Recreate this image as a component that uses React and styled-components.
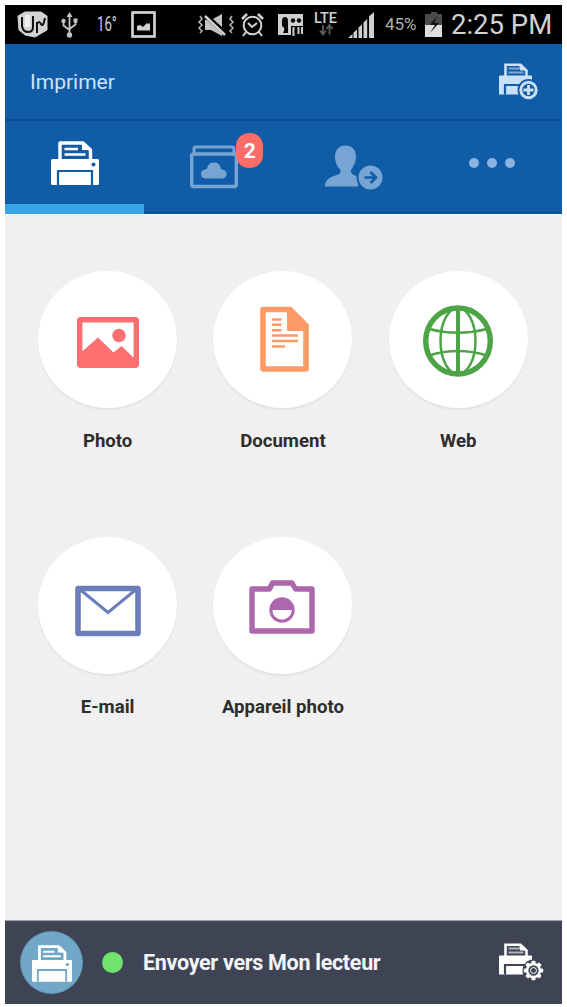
import React from 'react'
import styled, { createGlobalStyle } from 'styled-components';

const GlobalStyle = createGlobalStyle`
  body {
    margin: 0;
    background: #ffffff;
    font-family: Roboto, 'Liberation Sans', sans-serif;
  }
`;

const Screen = styled.div`
  box-sizing: border-box;
  width: 557px;
  height: 999px;
  margin: 5px;
  display: flex;
  flex-direction: column;
  background: #f0f0f0;
  overflow: hidden;
`;

const Svg = styled.svg`
  display: block;
  flex: none;
  margin-left: ${props => props.$gap || 0}px;
  overflow: visible;
`;

// status bar
const StatusBar = styled.div`
  height: 39px;
  flex: none;
  display: flex;
  align-items: center;
  background: #000000;
  color: #d2d2d2;
`;

const Temperature = styled.div`
  width: 20px;
  margin-left: 19px;
  font-size: 20px;
  line-height: 39px;
  white-space: nowrap;
  transform: scaleX(0.66);
  transform-origin: left center;
`;

const Network = styled.div`
  width: 27px;
  height: 39px;
  margin-left: 9px;
  display: flex;
  flex-direction: column;
  align-items: center;
  padding-top: 9px;
  box-sizing: border-box;
  font-size: 14.5px;
  line-height: 9px;
  font-weight: 500;
`;

const Percent = styled.div`
  width: 34px;
  margin-left: 11px;
  font-size: 17px;
  line-height: 39px;
  color: #aeaeae;
`;

const Clock = styled.div`
  margin-left: 9px;
  font-size: 27.5px;
  line-height: 39px;
  white-space: nowrap;
`;

// header
const TitleBar = styled.div`
  box-sizing: border-box;
  height: 77px;
  flex: none;
  display: flex;
  align-items: center;
  justify-content: space-between;
  padding: 1px 19px 0 25px;
  background: #105ca7;
  border-bottom: 2px solid #0a4a8b;
`;

const Title = styled.div`
  color: #cfe2fa;
  font-size: 21px;
  line-height: 24px;
`;

const Tabs = styled.div`
  height: 93px;
  flex: none;
  display: grid;
  grid-template-columns: repeat(4, 139.25px);
  background: #105ca7;
`;

const Tab = styled.div`
  box-sizing: border-box;
  position: relative;
  display: flex;
  justify-content: center;
  padding-top: ${props => props.$top}px;
  border-bottom: ${props => props.$active ? '10px solid #38a6e6' : '2px solid #0b4f9c'};
`;

const Badge = styled.div`
  position: absolute;
  left: 92px;
  top: 12px;
  width: 27px;
  height: 35px;
  border-radius: 13px;
  background: #fb6d66;
  color: #ffffff;
  font-size: 21px;
  font-weight: 700;
  line-height: 36px;
  text-align: center;
`;

// content
const Content = styled.div`
  flex: 1;
  display: grid;
  grid-template-columns: repeat(3, 175.3px);
  grid-auto-rows: 265.5px;
  align-content: start;
  padding: 56px 0 0 15px;
  border-top: 1px solid #fdfbfb;
`;

const Item = styled.div`
  display: flex;
  flex-direction: column;
  align-items: center;
`;

const Circle = styled.div`
  width: 139px;
  height: 137px;
  border-radius: 50%;
  display: flex;
  align-items: center;
  justify-content: center;
  background: #ffffff;
  box-shadow: 0 2px 2px rgba(0, 0, 0, 0.06);
`;

const Label = styled.div`
  margin-top: 22px;
  color: #2d2d2d;
  font-size: 18.6px;
  font-weight: 700;
  line-height: 22px;
  white-space: nowrap;
`;

// footer
const Footer = styled.div`
  box-sizing: border-box;
  height: 84px;
  flex: none;
  display: flex;
  align-items: center;
  padding: 0 19px 0 15px;
  background: #3f4455;
  border-top: 1px solid #9da0a8;
`;

const Avatar = styled.div`
  box-sizing: border-box;
  width: 63px;
  height: 63px;
  border-radius: 50%;
  border: 1px solid #5f92b5;
  display: flex;
  align-items: center;
  justify-content: center;
  background: #71a8c7;
`;

const Dot = styled.div`
  width: 21px;
  height: 21px;
  margin-left: 19px;
  border-radius: 50%;
  background: #70e36c;
`;

const Destination = styled.div`
  flex: 1;
  margin-left: 20px;
  color: #f4f5f7;
  font-size: 21.5px;
  font-weight: 700;
  letter-spacing: -0.3px;
  white-space: nowrap;
`;

function Printer({ size, color, back }) {
  return (
    <Svg width={size} height={size * 43 / 48} viewBox="0 0 48 43">
      <path d="M9 18V2h23l7.500 7V18" fill="none" stroke={color} strokeWidth="3.4" strokeLinejoin="round" />
      <path d="M31 2v7h8z" fill={color} />
      <path d="M13.500 8h13.500M13.500 13.500h21" stroke={color} strokeWidth="2.4" />
      <rect x="0" y="18" width="48" height="26" rx="1.5" fill={color} />
      <path d="M7 44V30h34V44" fill="none" stroke={back} strokeWidth="2.2" />
      <circle cx="42.5" cy="23.5" r="2" fill={back} />
    </Svg>
  )
}

function SmallPrinter({ color, back, children }) {
  return (
    <Svg width="44" height="39" viewBox="0 0 44 39">
      <path d="M6.5 13V1.8H21.500l6 5.700v5.500" fill="none" stroke={color} strokeWidth="2.6" />
      <path d="M9.500 5.500h11M9.500 9.500h15" stroke={color} strokeWidth="2.200" opacity="0.6" />
      <path d="M20 1l1 6.500h7z" fill={color} />
      <path d="M0 13.500a1 1 0 0 1 1-1h31a1 1 0 0 1 1 1v18H0z" fill={color} />
      <path d="M6 31.5V22h24" fill="none" stroke={back} strokeWidth="2.200" />
      {children}
    </Svg>
  )
}

function GearTeeth({ color }) {
  return [0, 45, 90, 135, 180, 225, 270, 315].map(angle => (
    <rect key={angle} x="32.5" y="17.8" width="4" height="4" rx="1" fill={color} transform={`rotate(${angle} 34.5 27.5)`} />
  ))
}

function PhotoIcon() {
  return (
    <Svg width="62" height="70" viewBox="0 0 62 70">
      <rect x="2.7" y="14.7" width="56.6" height="45.6" rx="1" fill="none" stroke="#fc6f71" strokeWidth="5.4" />
      <circle cx="42" cy="30.5" r="6.700" fill="#fc6f71" />
      <path d="M4 47.500L21 32.500 36.500 47.500 44.500 41 58 54v6H4z" fill="#fc6f71" />
    </Svg>
  )
}

function DocumentIcon() {
  return (
    <Svg width="50" height="70" viewBox="-2 0 50 70">
      <path d="M3 4.500H30L46 20.500V64H3z" fill="none" stroke="#fd9b67" strokeWidth="5.6" strokeLinejoin="round" />
      <path d="M27 4h4l15 16v6H27z" fill="#fd9b67" />
      <path d="M12 14.500h9.500M12 19.800h9.500M12 25.300h9.500M12 30.500h26M12 36h26M12 41.500h13" stroke="#fd9b67" strokeWidth="2.500" />
    </Svg>
  )
}

function WebIcon() {
  return (
    <Svg width="70" height="72" viewBox="0 0 70 72">
      <g fill="none" stroke="#4ca447" strokeWidth="2.500">
        <ellipse cx="35" cy="37" rx="32.300" ry="33" strokeWidth="5.400" />
        <ellipse cx="35" cy="37" rx="17.500" ry="33" />
        <path d="M35 4v66" strokeWidth="4" />
        <path d="M6 25Q35 32.500 64 25M6 51.500Q35 42.500 64 51.500" />
      </g>
    </Svg>
  )
}

function MailIcon() {
  return (
    <Svg width="66" height="70" viewBox="0 0 66 70">
      <rect x="3" y="18.500" width="60" height="45" rx="0.500" fill="none" stroke="#6c7eba" strokeWidth="5.600" strokeLinejoin="round" />
      <path d="M5 19.500L33 42.500 61 19.500" fill="none" stroke="#6c7eba" strokeWidth="3" />
    </Svg>
  )
}

function CameraIcon() {
  return (
    <Svg width="66" height="70" viewBox="1 0 66 70">
      <path d="M3 19H20.500L23.500 13H43L46.500 19H63V61H3z" fill="none" stroke="#ad67ae" strokeWidth="5.400" strokeLinejoin="round" />
      <circle cx="33" cy="40" r="11.200" fill="none" stroke="#ad67ae" strokeWidth="3" />
      <path d="M21 40a12 12 0 0 1 24 0z" fill="#ad67ae" />
    </Svg>
  )
}

const items = [
  { label: 'Photo', icon: <PhotoIcon /> },
  { label: 'Document', icon: <DocumentIcon /> },
  { label: 'Web', icon: <WebIcon /> },
  { label: 'E-mail', icon: <MailIcon /> },
  { label: 'Appareil photo', icon: <CameraIcon /> },
];

function Status() {
  return (
    <StatusBar>
      <Svg $gap={12} width="31" height="27" viewBox="0 0 31 27">
        <path d="M1 5L8 1 24 1 30 5V19L18 26 8 24 2 19z" fill="#d2d2d2" stroke="#d2d2d2" strokeLinejoin="round" />
        <path d="M5 6v9q1 6 6 6t5-5V5" fill="none" stroke="#111" strokeWidth="2" />
        <path d="M10.500 4v12" stroke="#eee" strokeWidth="5" />
        <path d="M20 22V11M20 13q2-4 4 0t4-6" fill="none" stroke="#111" strokeWidth="2" />
      </Svg>
      <Svg $gap={13} width="17" height="26" viewBox="0 0 17 26">
        <path d="M8.500 3v20M2.500 9v4.500L8.500 18M14.500 9v3.500L8.500 17" fill="none" stroke="#c4c4c4" strokeWidth="1.800" />
        <path d="M8.500 0l3 5h-6zM12.500 6.500h4v4h-4z" fill="#c4c4c4" />
        <circle cx="2.500" cy="9" r="2.200" fill="#c4c4c4" />
        <circle cx="8.500" cy="23" r="2.700" fill="#c4c4c4" />
      </Svg>
      <Temperature>16°</Temperature>
      <Svg $gap={14} width="25" height="27" viewBox="0 0 25 27">
        <rect x="1.500" y="1.500" width="22" height="24" fill="none" stroke="#d2d2d2" strokeWidth="2.700" />
        <path d="M6 19.500V15l3-1 3 2 4-4 1 1 2-1v7.500z" fill="#d2d2d2" />
      </Svg>
      <Svg $gap={42} width="36" height="24" viewBox="0 0 36 24">
        <path d="M7 7h6l11-6v22L13 17H7z" fill="#c4c4c4" />
        <path d="M6 1l22 20" stroke="#000" strokeWidth="5" />
        <path d="M7 3l20 19" stroke="#d0d0d0" strokeWidth="2.600" />
        <path d="M2 3l2 3-3 3 3 3-3 3 3 3-2 2M34 3l-2 3 3 3-3 3 3 3-3 3 2 2" fill="none" stroke="#b0b0b0" strokeWidth="1.600" />
      </Svg>
      <Svg $gap={7} width="23" height="24" viewBox="0 0 23 24">
        <circle cx="11.500" cy="12.500" r="8.800" fill="none" stroke="#d2d2d2" strokeWidth="2" />
        <path d="M7 10l4 4 5-4M5 19l-3 4M18 19l3 4" fill="none" stroke="#d2d2d2" strokeWidth="2" />
        <path d="M1 6l5-5M22 6l-5-5" stroke="#d2d2d2" strokeWidth="2.500" />
      </Svg>
      <Svg $gap={14} width="25" height="22" viewBox="0 0 25 22">
        <path d="M0 0h25v12H13v9H0z" fill="#cfcfcf" />
        <path d="M4 7q0-4 3-4t3 4v12H5q3-5-1-7z" fill="#080808" />
        <circle cx="15" cy="6.500" r="2.200" fill="#080808" />
        <circle cx="21" cy="6.500" r="2.200" fill="#080808" />
        <path d="M15.500 13v9M20.500 13v7M24 13v7" stroke="#cfcfcf" strokeWidth="2" />
      </Svg>
      <Network>
        LTE
        <Svg width="14" height="12" viewBox="0 -2 14 12">
          <path d="M4 0v8M1 5.500l3 4 3-4M10.500 9.500V1.500M7.500 4l3-4 3 4" fill="none" stroke="#5c5c5c" strokeWidth="1.800" />
        </Svg>
      </Network>
      <Svg $gap={9} width="26" height="26" viewBox="0 0 26 26">
        <path d="M0 26l4.500-4v4zM5.500 20.500l3.500-3v8.500H5.500zM10.500 15.500l3.500-3v13.500h-3.500zM15.500 10.500l3.700-3.500v19h-3.700zM21 4.500L26 0v26h-5z" fill="#cfcfcf" />
      </Svg>
      <Percent>45%</Percent>
      <Svg $gap={6} width="17" height="25" viewBox="0 0 17 25">
        <path d="M6 0h6v2h5v11H0V2h6z" fill="#4a4a4a" />
        <path d="M0 13h17v12H0z" fill="#dedede" />
        <path d="M12 4L5 13h5L5 21l9-10H9z" fill="#111" />
      </Svg>
      <Clock>2:25 PM</Clock>
    </StatusBar>
  )
}

export default function App() {
  return (
    <>
      <GlobalStyle />
      <Screen>
        <Status />

        <TitleBar>
          <Title>Imprimer</Title>
          <SmallPrinter color="#c9e0f6" back="#105ca7">
            <circle cx="29.500" cy="27" r="11" fill="#105ca7" />
            <circle cx="29.500" cy="27" r="7.700" fill="none" stroke="#c9e0f6" strokeWidth="3" />
            <path d="M29.500 22v10M24.500 27h10" stroke="#c9e0f6" strokeWidth="2.800" />
          </SmallPrinter>
        </TitleBar>

        <Tabs>
          <Tab $active $top={20}>
            <Printer size={48} color="#ffffff" back="#105ca7" />
          </Tab>
          <Tab $top={24}>
            <Svg width="48" height="44" viewBox="0 0 48 44">
              <path d="M4 9V3.500a1.500 1.500 0 0 1 1.500-1.500h37A1.500 1.500 0 0 1 44 3.500V9" fill="none" stroke="#76a5d3" strokeWidth="3" />
              <rect x="1.700" y="9" width="44.600" height="32.500" rx="2" fill="none" stroke="#76a5d3" strokeWidth="3.400" />
              <path d="M15 33.500a4.500 4.500 0 0 1-1-8.700q3 0 3.500-2.800a7 7 0 0 1 13 0Q31 25 34 25a4.500 4.500 0 0 1-1 8.500z" fill="#76a5d3" />
            </Svg>
            <Badge>2</Badge>
          </Tab>
          <Tab $top={24}>
            <Svg width="57" height="44" viewBox="0 0 57 44">
              <path d="M20.500 0.500C27 0.500 31 5 31 11.500c0 7-3 10-5 13.500-.5 3 1 4 4 5.500l3 1.500V41.500H0c0-6 3-9 12-11.500 3-.8 4-2 3.500-5C12.500 21.500 10 18 10 11.500 10 5 14 0.500 20.500 0.500z" fill="#76a5d3" />
              <circle cx="45.500" cy="32.500" r="14" fill="#105ca7" />
              <circle cx="45.500" cy="32.500" r="12" fill="#76a5d3" />
              <path d="M39.500 32.500h10M45.500 27l5.500 5.500L45.500 38" fill="none" stroke="#105ca7" strokeWidth="2.600" />
            </Svg>
          </Tab>
          <Tab $top={36}>
            <Svg width="46" height="12" viewBox="0 0 46 12">
              <circle cx="5" cy="6" r="5" fill="#8ab3df" />
              <circle cx="23" cy="6" r="5" fill="#8ab3df" />
              <circle cx="41" cy="6" r="5" fill="#8ab3df" />
            </Svg>
          </Tab>
        </Tabs>

        <Content>
          {items.map(item => (
            <Item key={item.label}>
              <Circle>{item.icon}</Circle>
              <Label>{item.label}</Label>
            </Item>
          ))}
        </Content>

        <Footer>
          <Avatar>
            <Printer size={40} color="#ffffff" back="#71a8c7" />
          </Avatar>
          <Dot />
          <Destination>Envoyer vers Mon lecteur</Destination>
          <SmallPrinter color="#ffffff" back="#3f4455">
            <circle cx="34.500" cy="27.500" r="11" fill="#3f4455" />
            <GearTeeth color="#ffffff" />
            <circle cx="34.500" cy="27.500" r="6.400" fill="none" stroke="#ffffff" strokeWidth="2.500" />
            <circle cx="34.500" cy="27.500" r="3" fill="none" stroke="#ffffff" strokeWidth="1" />
          </SmallPrinter>
        </Footer>
      </Screen>
    </>
  )
}
